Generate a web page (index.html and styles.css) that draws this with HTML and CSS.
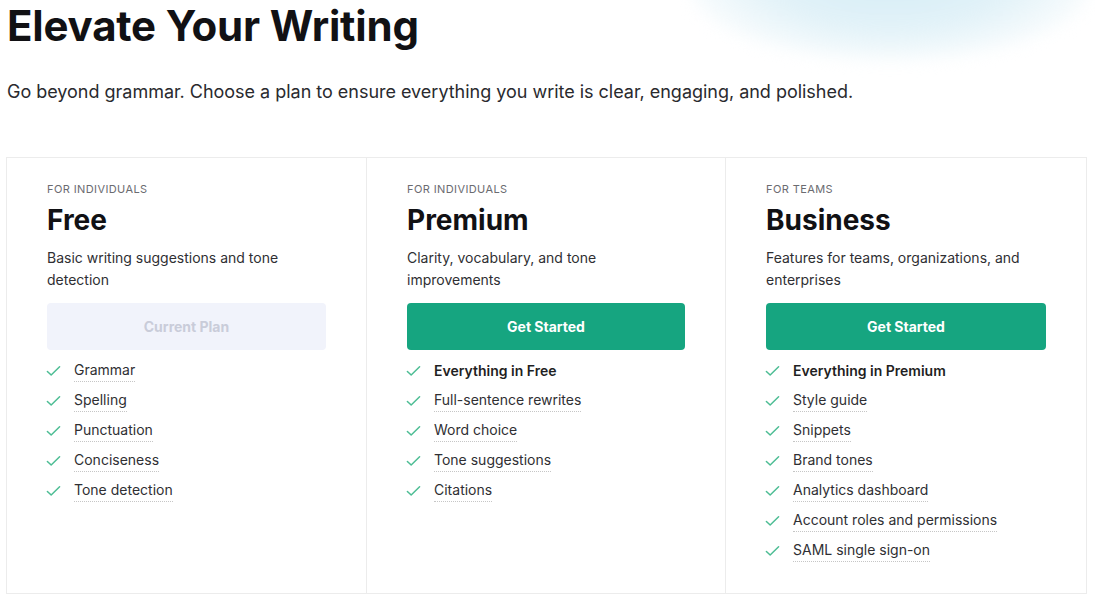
FILE: index.html
```html
<!DOCTYPE html>
<html lang="en">
<head>
<meta charset="utf-8">
<title>Elevate Your Writing</title>
<link rel="stylesheet" href="styles.css">
</head>
<body>
<div class="glow"></div>
<main class="page">
  <h1 class="title">Elevate Your Writing</h1>
  <p class="lead">Go beyond grammar. Choose a plan to ensure everything you write is clear, engaging, and polished.</p>

  <section class="plans">
    <article class="plan">
      <div class="eyebrow">For individuals</div>
      <h2 class="name">Free</h2>
      <p class="desc">Basic writing suggestions and tone detection</p>
      <button class="btn btn-current">Current Plan</button>
      <ul class="features">
        <li><svg class="chk" viewBox="0 0 16 12"><path d="M1.5 6.5l4 3.8L14.5 1.5"/></svg><span class="u">Grammar</span></li>
        <li><svg class="chk" viewBox="0 0 16 12"><path d="M1.5 6.5l4 3.8L14.5 1.5"/></svg><span class="u">Spelling</span></li>
        <li><svg class="chk" viewBox="0 0 16 12"><path d="M1.5 6.5l4 3.8L14.5 1.5"/></svg><span class="u">Punctuation</span></li>
        <li><svg class="chk" viewBox="0 0 16 12"><path d="M1.5 6.5l4 3.8L14.5 1.5"/></svg><span class="u">Conciseness</span></li>
        <li><svg class="chk" viewBox="0 0 16 12"><path d="M1.5 6.5l4 3.8L14.5 1.5"/></svg><span class="u">Tone detection</span></li>
      </ul>
    </article>

    <article class="plan">
      <div class="eyebrow">For individuals</div>
      <h2 class="name">Premium</h2>
      <p class="desc">Clarity, vocabulary, and tone improvements</p>
      <button class="btn btn-go">Get Started</button>
      <ul class="features">
        <li><svg class="chk" viewBox="0 0 16 12"><path d="M1.5 6.5l4 3.8L14.5 1.5"/></svg><span class="strong">Everything in Free</span></li>
        <li><svg class="chk" viewBox="0 0 16 12"><path d="M1.5 6.5l4 3.8L14.5 1.5"/></svg><span class="u">Full-sentence rewrites</span></li>
        <li><svg class="chk" viewBox="0 0 16 12"><path d="M1.5 6.5l4 3.8L14.5 1.5"/></svg><span class="u">Word choice</span></li>
        <li><svg class="chk" viewBox="0 0 16 12"><path d="M1.5 6.5l4 3.8L14.5 1.5"/></svg><span class="u">Tone suggestions</span></li>
        <li><svg class="chk" viewBox="0 0 16 12"><path d="M1.5 6.5l4 3.8L14.5 1.5"/></svg><span class="u">Citations</span></li>
      </ul>
    </article>

    <article class="plan">
      <div class="eyebrow">For teams</div>
      <h2 class="name">Business</h2>
      <p class="desc">Features for teams, organizations, and enterprises</p>
      <button class="btn btn-go">Get Started</button>
      <ul class="features">
        <li><svg class="chk" viewBox="0 0 16 12"><path d="M1.5 6.5l4 3.8L14.5 1.5"/></svg><span class="strong">Everything in Premium</span></li>
        <li><svg class="chk" viewBox="0 0 16 12"><path d="M1.5 6.5l4 3.8L14.5 1.5"/></svg><span class="u">Style guide</span></li>
        <li><svg class="chk" viewBox="0 0 16 12"><path d="M1.5 6.5l4 3.8L14.5 1.5"/></svg><span class="u">Snippets</span></li>
        <li><svg class="chk" viewBox="0 0 16 12"><path d="M1.5 6.5l4 3.8L14.5 1.5"/></svg><span class="u">Brand tones</span></li>
        <li><svg class="chk" viewBox="0 0 16 12"><path d="M1.5 6.5l4 3.8L14.5 1.5"/></svg><span class="u">Analytics dashboard</span></li>
        <li><svg class="chk" viewBox="0 0 16 12"><path d="M1.5 6.5l4 3.8L14.5 1.5"/></svg><span class="u">Account roles and permissions</span></li>
        <li><svg class="chk" viewBox="0 0 16 12"><path d="M1.5 6.5l4 3.8L14.5 1.5"/></svg><span class="u">SAML single sign-on</span></li>
      </ul>
    </article>
  </section>
</main>
</body>
</html>
```

FILE: styles.css
```css
* { box-sizing: border-box; }

html, body {
  margin: 0;
  padding: 0;
  background: #ffffff;
  overflow: hidden;
}

body {
  font-family: Inter, "Noto Sans", "Liberation Sans", sans-serif;
  color: #1b1b1f;
  position: relative;
  width: 1095px;
  height: 603px;
}

.glow {
  position: absolute;
  left: 690px;
  top: -90px;
  width: 400px;
  height: 150px;
  border-radius: 50%;
  background: radial-gradient(ellipse at 50% 40%, #d3ecf6 0%, #e2f2f8 45%, rgba(240, 248, 251, 0.6) 70%, rgba(255,255,255,0) 100%);
  filter: blur(8px);
  z-index: 0;
}

.page {
  position: relative;
  z-index: 1;
  padding: 0 8px 0 6px;
}

.title {
  margin: 0 0 0 1px;
  padding-top: 1px;
  font-size: 42px;
  line-height: 50px;
  font-weight: 700;
  letter-spacing: -0.2px;
  color: #111114;
}

.lead {
  margin: 28px 0 0 1px;
  font-size: 18px;
  line-height: 26px;
  letter-spacing: -0.02px;
  color: #2a2a2e;
}

.plans {
  margin-top: 52px;
  display: grid;
  grid-template-columns: 359px 359px 1fr;
  width: 1081px;
  border: 1px solid #ececec;
  background: #fff;
}

.plan {
  padding: 23px 40px 31px;
  border-left: 1px solid #ececec;
  display: flex;
  flex-direction: column;
}

.plan:first-child {
  border-left: none;
  padding-left: 40px;
}

.eyebrow {
  font-size: 11px;
  line-height: 16px;
  text-transform: uppercase;
  letter-spacing: 0.4px;
  color: #6b6b70;
}

.name {
  margin: 6px 0 0;
  font-size: 28px;
  line-height: 34px;
  font-weight: 700;
  color: #111114;
}

.desc {
  margin: 10px 0 0;
  font-size: 14px;
  line-height: 22px;
  color: #2f2f33;
}

.btn {
  margin-top: 12px;
  height: 47px;
  width: 100%;
  border: none;
  border-radius: 4px;
  font-family: inherit;
  font-size: 14px;
  font-weight: 700;
}

.btn-current {
  background: #f1f3fb;
  color: #c9ccd9;
}

.btn-go {
  background: #16a580;
  color: #ffffff;
}

.features {
  list-style: none;
  margin: 10px 0 0;
  padding: 0;
  display: flex;
  flex-direction: column;
  gap: 8px;
}

.features li {
  display: flex;
  align-items: center;
  height: 22px;
  font-size: 14px;
  line-height: 20px;
  color: #2f2f33;
}

.chk {
  width: 15px;
  height: 12px;
  margin-right: 13px;
  margin-left: -1px;
  flex: none;
  fill: none;
  stroke: #4dbd94;
  stroke-width: 1.6;
  stroke-linecap: round;
  stroke-linejoin: round;
}

.u {
  border-bottom: 1px dotted #c6c6c6;
  padding-bottom: 1px;
}

.strong {
  font-weight: 600;
  color: #1f1f23;
}
```
